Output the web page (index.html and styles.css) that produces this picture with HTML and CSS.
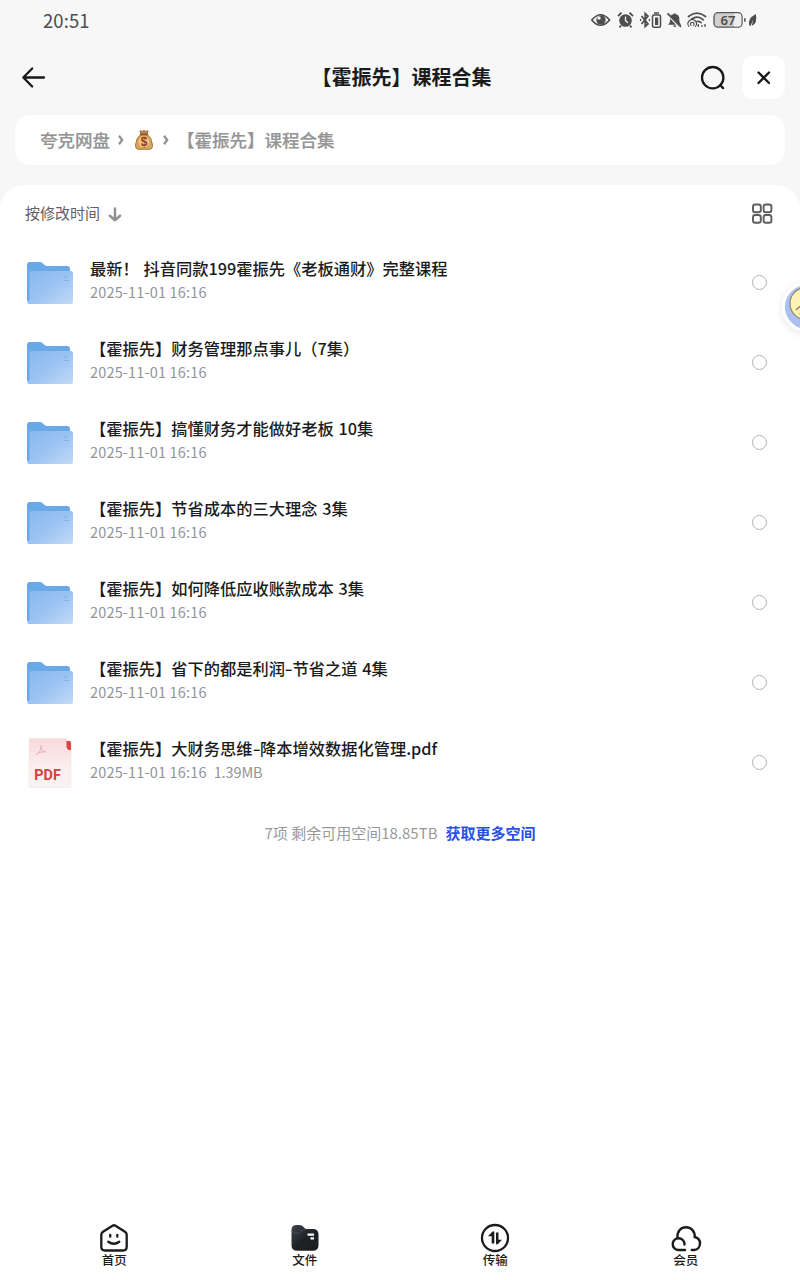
FILE: index.html
```html
<!DOCTYPE html>
<html lang="zh-CN">
<head>
<meta charset="utf-8">
<title>【霍振先】课程合集</title>
<link rel="stylesheet" href="styles.css">
</head>
<body>
<svg class="defs" width="0" height="0">
  <defs>
    <linearGradient id="fb" x1="0" y1="0" x2="1" y2="1"><stop offset="0" stop-color="#86b8f0"/><stop offset=".5" stop-color="#9ac3f2"/><stop offset="1" stop-color="#c3daf6"/></linearGradient>
    <linearGradient id="pg" x1="0" y1="0" x2="0" y2="1"><stop offset="0" stop-color="#f9d9dc"/><stop offset=".6" stop-color="#fbeeee"/><stop offset="1" stop-color="#f5f3f3"/></linearGradient>
    <linearGradient id="dk" x1="0" y1="0" x2="1" y2="1"><stop offset="0" stop-color="#3d464c"/><stop offset=".5" stop-color="#202326"/><stop offset="1" stop-color="#191b1d"/></linearGradient>
    <symbol id="folder" viewBox="0 0 46 42">
      <path d="M0 39V2.500Q0 0 2.500 0H13q1.500 0 2.500 1l2 2q1 1 2.500 1H40q3 0 3 3v32z" fill="#69a9e8"/>
      <path d="M2.500 11Q2.500 9 4.500 9H44q2 0 2 2v29q0 2-2 2H2q-2 0-2-2 2.500-1 2.500-3z" fill="url(#fb)"/>
      <path d="M37 15h2M40 15h2M37 18.500h5" stroke="#83b0e6" stroke-width="1"/>
    </symbol>
  </defs>
</svg>

<header class="status">
  <span class="clock">20:51</span>
  <svg class="status-icons" width="168" height="20" viewBox="0 0 168 20">
    <path d="M1.800 10Q10.500-.5 19.600 10 10.500 20.500 1.800 10z" fill="none" stroke="#4d4d4d" stroke-width="1.700" stroke-linejoin="round"/>
    <circle cx="11" cy="10" r="4.700" fill="#4d4d4d"/><circle cx="9" cy="8" r="1.700" fill="#f7f7f7"/>
    <g fill="#4d4d4d">
      <circle cx="35.500" cy="10.500" r="6.300"/>
      <path d="M28 6.200l3.500-3.500M43 6.200l-3.500-3.500M31 15.500l-1.500 1.800M40 15.500l1.500 1.800" stroke="#4d4d4d" stroke-width="1.900"/>
      <path d="M35.500 6.500v4.200l2.500 2" fill="none" stroke="#f7f7f7" stroke-width="1.300"/>
    </g>
    <path d="M51.500 6l6.500 8-2.800 2.500v-13L58 6l-6.500 8" fill="none" stroke="#4d4d4d" stroke-width="1.700"/>
    <path d="M50 10h1.200M58.800 10h1.200" stroke="#4d4d4d" stroke-width="1.800"/>
    <rect x="62.500" y="5" width="8" height="12.300" rx="1.500" fill="none" stroke="#4d4d4d" stroke-width="1.500"/>
    <path d="M64 3h5" stroke="#4d4d4d" stroke-width="1.500"/><rect x="65" y="7.500" width="3.200" height="7.500" fill="#4d4d4d"/>
    <path d="M78 14.800h13.300q-2-2-2-4V8.500q0-3.500-3.300-4.200-1-2-2.600 0-3.400.7-3.400 4.200V11q0 2-2 3.800z" fill="#4d4d4d"/>
    <path d="M82.500 15.500h4.500l-2.200 1.800z" fill="#4d4d4d"/>
    <path d="M77.500 4.800L91 18.300" stroke="#f7f7f7" stroke-width="2"/><path d="M77.500 3.300L91 16.800" stroke="#4d4d4d" stroke-width="1.700"/>
    <g fill="none" stroke="#4d4d4d" stroke-width="1.700" stroke-linecap="round">
      <path d="M98.500 6.500q8.500-6.800 17 0M101.500 9.300q6-4.500 11.800.5M107 11.500q2.500-.7 4 1"/>
      <path d="M99 16.500a4.200 4.200 0 1 1 6.400 0M101 15.300a1.800 1.800 0 1 1 2.500 0" stroke-width="1.100"/>
      <path d="M108.300 14.800v1.500M112 15.800v.5M115 14.800v1.500" stroke-width="1.500"/>
    </g>
    <rect x="124" y="2.700" width="28" height="14.500" rx="4" fill="#d0d0d0" stroke="#555" stroke-width="1.300"/>
    <path d="M144 3.400h4q3.300 0 3.300 3.300v6.600q0 3.200-3.300 3.200h-4z" fill="#efefef"/>
    <text x="138" y="14.700" text-anchor="middle" class="battery">67</text>
    <path d="M154.800 8.300v3.500" stroke="#555" stroke-width="1.600"/>
    <path d="M159.300 15.500q-2.500-6.500 6.500-11.500 2 9-4 12l1.300-6.500-2.500 6.500z" fill="#4d4d4d"/>
  </svg>
</header>

<div class="titlebar">
  <svg width="26" height="24" viewBox="0 0 26 24" fill="none" stroke="#181818" stroke-width="2.300" stroke-linecap="round" stroke-linejoin="round"><path d="M23 11.500H2.500M11.200 2.500L2.300 11.500l8.900 9"/></svg>
  <h1>【霍振先】课程合集</h1>
  <div class="actions">
    <svg width="26" height="26" viewBox="0 0 26 26" fill="none" stroke="#181818" stroke-width="2.300" stroke-linecap="round"><circle cx="12.700" cy="12.700" r="10.700"/><path d="M20.300 20.300l2.800 2.800"/></svg>
    <span class="close"><svg width="14" height="14" viewBox="0 0 14 14" stroke="#181818" stroke-width="2.300" stroke-linecap="round"><path d="M1.500 1.500l10.500 10.500M12 1.500L1.500 12"/></svg></span>
  </div>
</div>

<nav class="crumbs">
  <span>夸克网盘</span>
  <svg class="chev" width="6" height="10" viewBox="0 0 6 10"><path d="M1 .8l3.200 4.200L1 9.200" fill="none" stroke="#929292" stroke-width="2.300"/></svg>
  <svg class="bag" width="18" height="20" viewBox="0 0 18 20">
    <path d="M6 4Q1 8 .7 14-.2 19.500 4 19.300h10q4.200.2 3.300-5.300Q17 8 12 4z" fill="#d9a55a" stroke="#a07036" stroke-width=".9"/>
    <path d="M4.800 .8l2.200 .5L9 .6l2 .7 2.200-.5-1 3.700H5.800z" fill="#b98848" stroke="#89602f" stroke-width=".7"/>
    <path d="M5 4.500h8" stroke="#805226" stroke-width="1.500"/>
    <circle cx="9" cy="12" r="5.300" fill="#ecc985"/>
    <text x="9" y="16" text-anchor="middle" class="dollar">$</text>
  </svg>
  <svg class="chev second" width="6" height="10" viewBox="0 0 6 10"><path d="M1 .8l3.200 4.200L1 9.200" fill="none" stroke="#929292" stroke-width="2.300"/></svg>
  <span class="current">【霍振先】课程合集</span>
</nav>

<main class="panel">
  <div class="sort">
    <span>按修改时间</span>
    <svg width="14" height="15" viewBox="0 0 14 15" fill="none" stroke="#929292" stroke-width="2.500" stroke-linecap="round" stroke-linejoin="round"><path d="M7 1.500v11.500M1.900 8.700L7 13.200l5.100-4.500"/></svg>
    <svg class="grid" width="22" height="22" viewBox="0 0 22 22" fill="none" stroke="#5c5c5c" stroke-width="1.900"><rect x="2" y="1.500" width="7.800" height="7.800" rx="2.300"/><rect x="12.600" y="1.500" width="7.800" height="7.800" rx="2.300"/><rect x="2" y="12" width="7.800" height="7.800" rx="2.300"/><rect x="12.600" y="12" width="7.800" height="7.800" rx="2.300"/></svg>
  </div>
  <ul class="files">
    <li><svg class="icon"><use href="#folder"/></svg><div class="info"><p class="name">最新！ 抖音同款199霍振先《老板通财》完整课程</p><p class="date">2025-11-01 16:16</p></div><i class="radio"></i></li>
    <li><svg class="icon"><use href="#folder"/></svg><div class="info"><p class="name">【霍振先】财务管理那点事儿（7集）</p><p class="date">2025-11-01 16:16</p></div><i class="radio"></i></li>
    <li><svg class="icon"><use href="#folder"/></svg><div class="info"><p class="name">【霍振先】搞懂财务才能做好老板 10集</p><p class="date">2025-11-01 16:16</p></div><i class="radio"></i></li>
    <li><svg class="icon"><use href="#folder"/></svg><div class="info"><p class="name">【霍振先】节省成本的三大理念 3集</p><p class="date">2025-11-01 16:16</p></div><i class="radio"></i></li>
    <li><svg class="icon"><use href="#folder"/></svg><div class="info"><p class="name">【霍振先】如何降低应收账款成本 3集</p><p class="date">2025-11-01 16:16</p></div><i class="radio"></i></li>
    <li><svg class="icon"><use href="#folder"/></svg><div class="info"><p class="name">【霍振先】省下的都是利润<span class="dash">-</span>节省之道 4集</p><p class="date">2025-11-01 16:16</p></div><i class="radio"></i></li>
    <li>
      <svg class="icon pdf" viewBox="0 0 46 50">
        <path d="M2 2Q2 .5 3.500.5H39l5 5V48q0 1.500-1.500 1.500h-39Q2 49.500 2 48z" fill="url(#pg)" stroke="#f2e6e7" stroke-width=".7"/>
        <path d="M39.500 3h3q1.500 0 1.500 1.500V12h-2q-2.500-1-2.500-3.500z" fill="#dd4444"/>
        <path d="M13.500 7.500q1.500 5-4.500 9.500 3-4 10-3-5-1-5.500-6.500z" fill="none" stroke="#e8b4b8" stroke-width="1"/>
        <text x="7.300" y="41.500" textLength="26.500" lengthAdjust="spacingAndGlyphs" class="pdf-text">PDF</text>
      </svg>
      <div class="info"><p class="name">【霍振先】大财务思维<span class="dash">-</span>降本增效数据化管理.pdf</p><p class="date">2025-11-01 16:16<span class="size">1.39MB</span></p></div><i class="radio"></i>
    </li>
  </ul>
  <p class="summary"><span class="left">7项 剩余可用空间18.85TB</span><a>获取更多空间</a></p>
</main>

<footer class="tabs">
  <div class="tab">
    <svg width="30" height="30" viewBox="0 0 30 30" fill="none" stroke="#1b1b1b" stroke-width="2.300" stroke-linejoin="round" stroke-linecap="round"><path d="M13.500 2.700q1.500-.9 3 0L26 8.800q1.700 1.200 1.700 3v12q0 3.700-3.700 3.700H6q-3.700 0-3.700-3.700v-12q0-1.800 1.700-3z"/><path d="M11.200 12v1.700M18.300 12v1.700M9.300 18.700q5.500 4 11 0"/></svg>
    <span>首页</span>
  </div>
  <div class="tab">
    <svg width="30" height="30" viewBox="0 0 30 30"><path d="M1.500 7q0-5 5-5h3q3 0 4.500 2.500Q15 6 17 6h6q5.500 0 5.500 5.500V22q0 5.800-5.800 5.800H7.300Q1.500 27.800 1.500 22z" fill="url(#dk)"/><path d="M1.500 8q5 4 8.500 1.500Q12 6 16 6" fill="none" stroke="#54616a" stroke-width=".6"/><path d="M17.500 11.700h6.500M20.500 15.300h3.500" stroke="#fff" stroke-width="2.300"/></svg>
    <span>文件</span>
  </div>
  <div class="tab">
    <svg width="30" height="30" viewBox="0 0 30 30"><circle cx="15" cy="15" r="13" fill="none" stroke="#1b1b1b" stroke-width="2.300"/><path d="M8 13.200L12.300 8.800q2-1.300 2 .8v10.800h-2.600v-7.200zM22 16.800l-4 4.200q-2 1.300-2-.8V9.500h2.500v7.300z" fill="#1b1b1b"/></svg>
    <span>传输</span>
  </div>
  <div class="tab">
    <svg width="32" height="30" viewBox="0 0 32 30" fill="none" stroke="#1b1b1b" stroke-width="2.400" stroke-linecap="round"><path d="M15 27H8.200a5.900 5.900 0 1 1 6.300-5.500M7.400 15C7 8 11 4.200 16 4.200s9 3.800 8.700 9.800c3.400.8 5.300 3.300 5.300 6.400 0 3.600-2.500 6.300-6 6.600h-2.200"/></svg>
    <span>会员</span>
  </div>
</footer>

<div class="floater">
  <svg width="50" height="50" viewBox="0 0 50 50"><circle cx="25" cy="25" r="23.500" fill="#a9c0f1" stroke="#fff" stroke-width="3"/><circle cx="24" cy="21.500" r="16" fill="#fbf2b4" stroke="#8e8571" stroke-width="1.100"/><path d="M14 28l6-5.500" stroke="#8a7d60" stroke-width="1.300"/><path d="M16 32l4-3v5z" fill="#efc77b"/></svg>
</div>
</body>
</html>
```
FILE: styles.css
```css
* { box-sizing: border-box; margin: 0; padding: 0; }
html, body { width: 800px; height: 1280px; overflow: hidden; }
body {
  position: relative;
  display: flex;
  flex-direction: column;
  background: #f7f7f7;
  color: #1b1b1b;
  font-family: "Noto Sans CJK SC", sans-serif;
  text-spacing-trim: space-all;
}
svg { display: block; flex: none; }
.defs { position: absolute; }

.status { display: flex; height: 41px; justify-content: space-between; align-items: center; padding: 0 42px 1px 43px; }
.clock { font-size: 18.5px; line-height: 24px; color: #4d4d4d; letter-spacing: .1px; }
.battery { font: 600 13px "Noto Sans", sans-serif; fill: #4d4d4d; }

.titlebar { display: grid; grid-template-columns: 150px 1fr 150px; align-items: center; height: 73px; padding: 0 15px 0 21px; }
.titlebar h1 { font-size: 20px; line-height: 28px; text-align: center; white-space: nowrap; padding: 0 3px 1px 0; }
.actions { display: flex; align-items: center; justify-content: flex-end; gap: 16px; }
.close { display: flex; align-items: center; justify-content: center; width: 43px; height: 43px; border-radius: 11px; background: #fff; }

.crumbs { display: flex; align-items: center; height: 50px; margin: 1px 15px 0; padding: 0 25px; border-radius: 15px; background: #fff; color: #949494; font-size: 17.5px; line-height: 26px; font-weight: 500; white-space: nowrap; }
.crumbs span { -webkit-text-stroke: .2px #949494; }
.crumbs .chev { margin-left: 8px; }
.crumbs .second { margin-left: 10px; }
.crumbs .bag { margin-left: 11px; }
.crumbs .current { margin-left: 8px; }
.dollar { font: bold 12px "Liberation Sans", sans-serif; fill: #963521; }

.panel { flex: 1; margin-top: 20px; border-radius: 25px 25px 0 0; background: #fff; }
.sort { display: flex; align-items: center; height: 58px; padding: 0 27px 0 25px; font-size: 15px; line-height: 22px; color: #616161; }
.sort span { padding-bottom: 2px; }
.sort svg { margin-left: 8px; }
.sort .grid { margin-left: auto; }

.files { list-style: none; }
.files li { display: flex; align-items: center; height: 80px; padding: 0 33px 0 27px; }
.icon { width: 46px; height: 42px; }
.icon.pdf { height: 50px; margin-top: -1px; }
.pdf-text { font: bold 15.500px "Roboto", sans-serif; fill: #d83e3d; }
.info { flex: 1; margin-left: 17px; margin-top: -6px; white-space: nowrap; }
.name { font-size: 16.25px; line-height: 24px; font-weight: 500; word-spacing: 1px; }
.dash { display: inline-block; width: 7.500px; text-align: center; transform: scaleX(1.35); }
.date { font-size: 14.5px; line-height: 24px; color: #949494; letter-spacing: .17px; }
.size { margin-left: 7px; letter-spacing: -.1px; }
.radio { width: 15px; height: 15px; margin-top: -1px; border: 1px solid #b3b3b3; border-radius: 50%; }

.summary { display: flex; justify-content: center; padding-top: 18px; gap: 8px; font-size: 15px; line-height: 24px; color: #999; white-space: nowrap; }
.summary a { color: #2950e8; font-weight: 700; }

.tabs { display: flex; height: 60px; padding: 0 19px; background: #fff; }
.tab { display: flex; flex: 1; flex-direction: column; align-items: center; padding-top: 3px; font-size: 12.5px; line-height: 16px; font-weight: 500; }
.tab span { margin-top: -1px; }

.floater { position: absolute; left: 782px; top: 282px; width: 50px; height: 50px; border-radius: 50%; box-shadow: 0 2px 9px rgba(0, 0, 0, .1); }
```
